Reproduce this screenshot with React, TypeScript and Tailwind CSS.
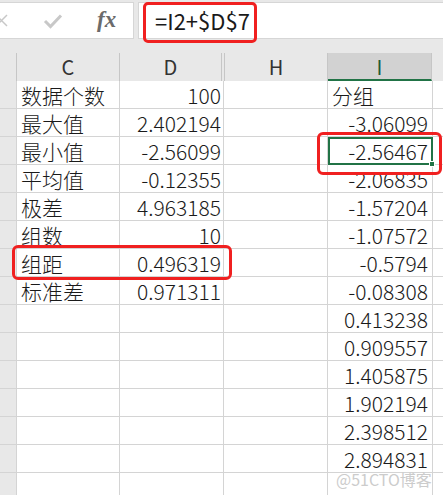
import React from 'react';

const font = { fontFamily: '"Noto Sans CJK SC", "Noto Sans", sans-serif' };

const rows = [
  { c: '数据个数', d: '100', i: '分组' },
  { c: '最大值', d: '2.402194', i: '-3.06099' },
  { c: '最小值', d: '-2.56099', i: '-2.56467' },
  { c: '平均值', d: '-0.12355', i: '-2.06835' },
  { c: '极差', d: '4.963185', i: '-1.57204' },
  { c: '组数', d: '10', i: '-1.07572' },
  { c: '组距', d: '0.496319', i: '-0.5794' },
  { c: '标准差', d: '0.971311', i: '-0.08308' },
  { c: '', d: '', i: '0.413238' },
  { c: '', d: '', i: '0.909557' },
  { c: '', d: '', i: '1.405875' },
  { c: '', d: '', i: '1.902194' },
  { c: '', d: '', i: '2.398512' },
  { c: '', d: '', i: '2.894831' },
  { c: '', d: '', i: '' },
];

const App: React.FC = () => {
  return (
    <div className="relative w-[443px] h-[495px] overflow-hidden bg-white text-[#1a1a1a]" style={font}>
      {/* formula bar */}
      <div className="flex h-[53px] bg-[#e8e8e8] pt-[2px]">
        <div className="flex h-[37px] w-[134px] items-center border border-l-0 border-[#d6d6d6] bg-white">
          <svg width="8" height="14" viewBox="0 0 8 14">
            <path d="M-4 1 L7 12 M7 1 L-4 12" fill="none" stroke="#c8c8c8" strokeWidth="1.5" />
          </svg>
          <svg className="ml-[35px]" width="20" height="16" viewBox="0 0 20 16">
            <path d="M2 8 L7.5 13.5 L18 2.5" fill="none" stroke="#c8c8c8" strokeWidth="3" />
          </svg>
          <span
            className="ml-[34px] pb-[2px] text-[23px] italic font-bold leading-none text-[#6b6b6b]"
            style={{ fontFamily: '"Liberation Serif", serif' }}
          >
            fx
          </span>
        </div>
        <div className="ml-[4px] flex h-[37px] flex-1 items-center border border-r-0 border-[#d6d6d6] bg-white pl-[16px] text-[22px]">
          =I2+$D$7
        </div>
      </div>

      {/* column headers */}
      <div className="flex h-[28px] bg-[#e8e8e8] text-[20px] leading-[28px] text-[#333]">
        <div className="w-[17px] border-r border-[#c6c6c6]" />
        <div className="w-[103px] border-r border-[#c6c6c6] text-center">C</div>
        <div className="w-[102px] border-r border-[#c6c6c6] text-center">D</div>
        <div className="w-[3px] border-r border-[#c6c6c6]" />
        <div className="w-[103px] border-r border-[#c6c6c6] text-center">H</div>
        <div className="w-[104px] border-r border-[#c6c6c6] border-b-2 border-b-[#217346] bg-[#d2d2d2] text-center text-[#1e5c38]">I</div>
        <div className="flex-1" />
      </div>

      {/* grid */}
      {rows.map((r, idx) => (
        <div key={idx} className="flex h-[28px] text-[21px] font-light leading-[29px]">
          <div className="w-[17px] border-r border-b border-[#d4d4d4] bg-[#e8e8e8]" />
          <div className="w-[103px] border-r border-b border-[#d4d4d4] pl-[4px] whitespace-nowrap">{r.c}</div>
          <div className="w-[104px] border-r border-b border-[#d4d4d4] pr-[2px] text-right whitespace-nowrap">{r.d}</div>
          <div className="w-[104px] border-r border-b border-[#d4d4d4]" />
          <div
            className={
              idx === 2
                ? 'relative w-[105px] border-2 border-[#217346] pr-[3px] text-right leading-[25px] whitespace-nowrap'
                : idx === 0
                ? 'w-[105px] border-r border-b border-[#d4d4d4] pl-[4px] whitespace-nowrap'
                : 'w-[105px] border-r border-b border-[#d4d4d4] pr-[4px] text-right whitespace-nowrap'
            }
          >
            {r.i}
            {idx === 2 && (
              <div className="absolute -right-[4px] -bottom-[4px] h-[6px] w-[6px] border border-white bg-[#217346]" />
            )}
          </div>
          <div className="flex-1 border-b border-[#d4d4d4]" />
        </div>
      ))}

      {/* red annotation boxes */}
      <div className="absolute left-[143px] top-[2px] h-[41px] w-[114px] rounded-[5px] border-[3px] border-[#f02020]" />
      <div className="absolute left-[317px] top-[132px] h-[43px] w-[125px] rounded-[6px] border-[3px] border-[#f02020]" />
      <div className="absolute left-[12px] top-[245px] h-[35px] w-[220px] rounded-[6px] border-[3px] border-[#f02020]" />

      {/* watermark */}
      <div className="absolute left-[336px] top-[470px] text-[16px] leading-[18px] text-[#cccccc]">@51CTO博客</div>
    </div>
  );
};

export default App;
